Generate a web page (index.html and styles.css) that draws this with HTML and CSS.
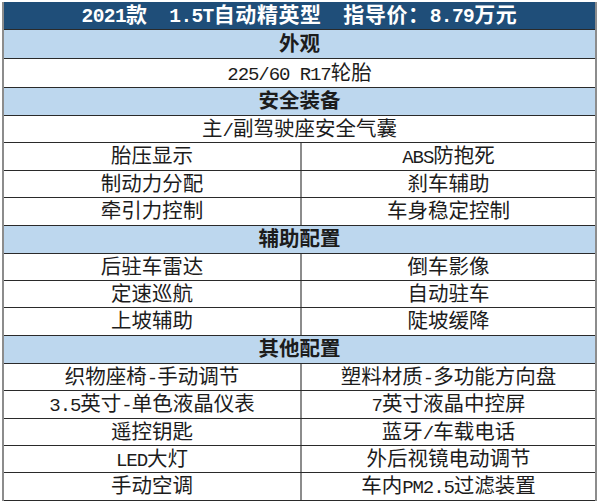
FILE: index.html
```html
<!DOCTYPE html>
<html lang="zh">
<head>
<meta charset="utf-8">
<link rel="stylesheet" href="styles.css">
</head>
<body>
<div class="sheet">
  <div class="row head"><span class="en">2021</span>款　<span class="en">1.5T</span>自动精英型　指导价：<span class="en">8.79</span>万元</div>
  <div class="row sec tall">外观</div>
  <div class="row full tall"><span class="en">225/60 R17</span>轮胎</div>
  <div class="row sec">安全装备</div>
  <div class="row full">主<span class="en">/</span>副驾驶座安全气囊</div>
  <div class="row two"><div class="cell">胎压显示</div><div class="cell r"><span class="en">ABS</span>防抱死</div></div>
  <div class="row two"><div class="cell">制动力分配</div><div class="cell r">刹车辅助</div></div>
  <div class="row two"><div class="cell">牵引力控制</div><div class="cell r">车身稳定控制</div></div>
  <div class="row sec">辅助配置</div>
  <div class="row two"><div class="cell">后驻车雷达</div><div class="cell r">倒车影像</div></div>
  <div class="row two"><div class="cell">定速巡航</div><div class="cell r">自动驻车</div></div>
  <div class="row two"><div class="cell">上坡辅助</div><div class="cell r">陡坡缓降</div></div>
  <div class="row sec">其他配置</div>
  <div class="row two"><div class="cell">织物座椅<span class="en">-</span>手动调节</div><div class="cell r">塑料材质<span class="en">-</span>多功能方向盘</div></div>
  <div class="row two"><div class="cell"><span class="en">3.5</span>英寸<span class="en">-</span>单色液晶仪表</div><div class="cell r"><span class="en">7</span>英寸液晶中控屏</div></div>
  <div class="row two"><div class="cell">遥控钥匙</div><div class="cell r">蓝牙<span class="en">/</span>车载电话</div></div>
  <div class="row two"><div class="cell"><span class="en">LED</span>大灯</div><div class="cell r">外后视镜电动调节</div></div>
  <div class="row two"><div class="cell">手动空调</div><div class="cell r">车内<span class="en">PM2.5</span>过滤装置</div></div>
</div>
</body>
</html>
```
FILE: styles.css
```css
html, body {
  margin: 0;
  padding: 0;
  background: #ffffff;
}
body {
  font-family: "Liberation Serif", "Noto Sans CJK SC", serif;
  color: #1c1c1c;
}
.en {
  display: inline-block;
  line-height: 20px;
  font-family: "Liberation Mono", monospace;
  font-size: 0.93em;
  letter-spacing: -1.1px;
}
.sheet {
  margin-left: 2px;
  margin-top: 2px;
  width: 591px;
  border-left: 2px solid #8c8c8c;
  border-right: 2px solid #8c8c8c;
  display: flex;
  flex-direction: column;
}
.row {
  height: 26.4px;
  border-bottom: 1px solid #2a2a2a;
  font-size: 20.5px;
  line-height: 26px;
  text-align: center;
  white-space: nowrap;
  box-sizing: content-box;
}
.row.tall {
  height: 28px;
  line-height: 28px;
}
.head {
  height: 27px;
  line-height: 27px;
  background: #1f4e79;
  color: #ffffff;
  font-weight: 700;
  font-size: 21px;
  letter-spacing: 0.6px;
}
.head .en {
  letter-spacing: -0.6px;
}
.sec {
  background: #bdd7ee;
  font-weight: 700;
  height: 27px;
  line-height: 27px;
}
.sec.tall {
  height: 28px;
}
.two {
  display: grid;
  grid-template-columns: 296px 1fr;
}
.cell {
  text-align: center;
}
.cell.r {
  border-left: 2px solid #8c8c8c;
}
```
